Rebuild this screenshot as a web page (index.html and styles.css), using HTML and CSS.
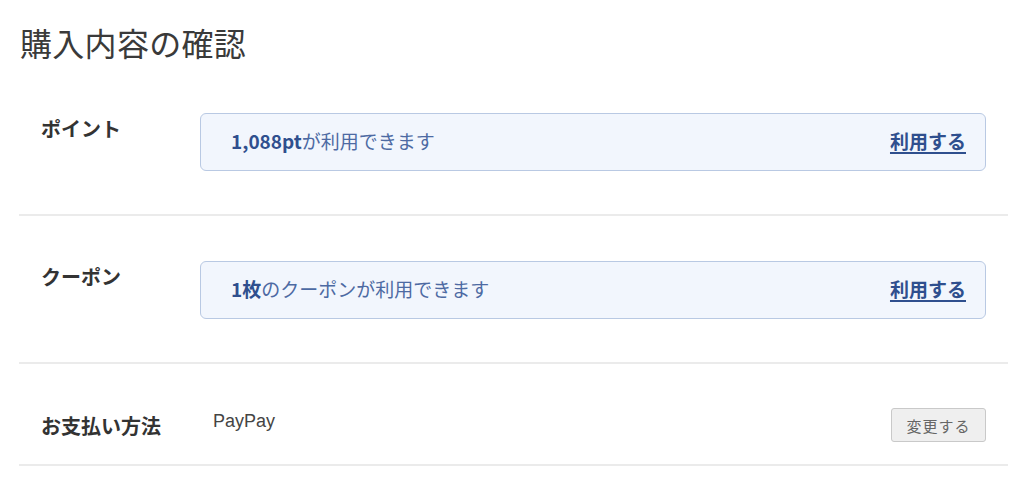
FILE: index.html
```html
<!DOCTYPE html>
<html lang="ja">
<head>
<meta charset="utf-8">
<title>購入内容の確認</title>
<link rel="stylesheet" href="styles.css">
</head>
<body>
<main class="page">
  <h1 class="title">購入内容の確認</h1>
  <section class="row">
    <div class="label">ポイント</div>
    <div class="box">
      <span class="box-text"><b class="em">1,088pt</b>が利用できます</span>
      <a class="use" href="#">利用する</a>
    </div>
  </section>
  <section class="row">
    <div class="label">クーポン</div>
    <div class="box">
      <span class="box-text"><b class="em">1枚</b>のクーポンが利用できます</span>
      <a class="use" href="#">利用する</a>
    </div>
  </section>
  <section class="row row-pay">
    <div class="label label-pay">お支払い方法</div>
    <div class="pay">
      <span class="pay-name">PayPay</span>
      <button class="change" type="button">変更する</button>
    </div>
  </section>
</main>
</body>
</html>
```
FILE: styles.css
```css
html, body {
  margin: 0;
  padding: 0;
  background: #ffffff;
}
body {
  font-family: "Noto Sans CJK JP", "Noto Sans", sans-serif;
  color: #333333;
}
.page {
  padding: 22px 16px 0 19px;
}
.title {
  margin: 0 0 6px 1px;
  font-size: 32px;
  line-height: 40px;
  font-weight: 400;
  color: #3a3a3a;
  letter-spacing: 0.3px;
}
.row {
  display: grid;
  grid-template-columns: 159px 1fr;
  align-items: start;
  padding: 45px 22px 43px 22px;
  border-bottom: 2px solid #ebebeb;
}
.label {
  font-size: 20px;
  font-weight: 700;
  line-height: 32px;
  color: #333333;
}
.box {
  display: flex;
  align-items: center;
  justify-content: space-between;
  height: 56px;
  padding: 0 19px 0 30px;
  background: #f2f6fd;
  border: 1px solid #b9c9e3;
  border-radius: 6px;
  font-size: 19px;
  color: #4d6aa3;
}
.box-text {
  line-height: 1;
  margin-top: -3px;
}
.em {
  font-weight: 700;
  color: #2f4f8e;
}
.use {
  font-weight: 700;
  color: #2f4f8e;
  text-decoration: underline;
  text-decoration-thickness: 2px;
  text-underline-offset: 3px;
  margin-top: -3px;
}
.row-pay {
  align-items: center;
  padding: 43px 22px 21px 22px;
}
.label-pay {
  font-size: 20px;
  line-height: 34px;
  padding-top: 2px;
}
.pay {
  display: flex;
  align-items: center;
  justify-content: space-between;
  padding-left: 13px;
}
.pay-name {
  font-family: "Liberation Sans", "Noto Sans CJK JP", sans-serif;
  font-size: 18px;
  color: #444444;
  margin-top: -7px;
}
.change {
  width: 95px;
  height: 34px;
  padding: 0;
  background: #efefef;
  border: 1px solid #c9c9c9;
  border-radius: 3px;
  font-family: "Noto Sans CJK JP", sans-serif;
  font-size: 15px;
  color: #666666;
  letter-spacing: 1px;
}
```
